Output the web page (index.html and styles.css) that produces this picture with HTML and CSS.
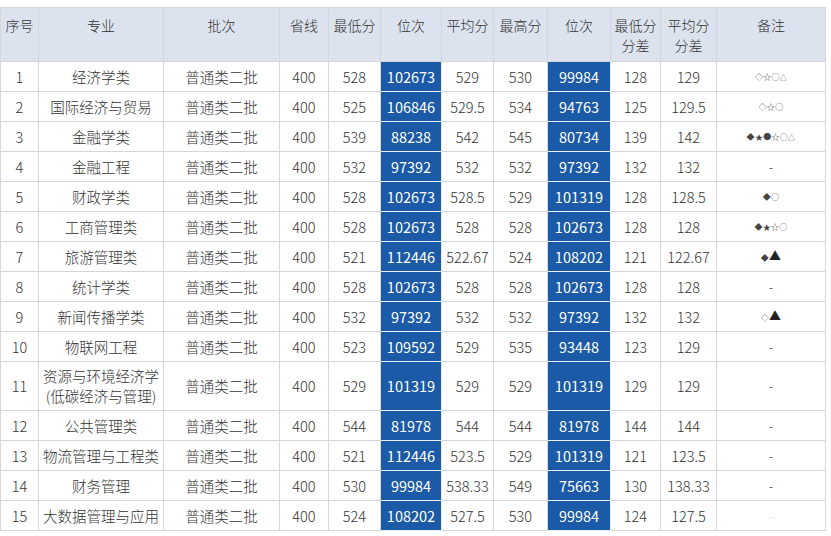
FILE: index.html
```html
<!DOCTYPE html>
<html lang="zh">
<head>
<meta charset="utf-8">
<title>分数表</title>
<link rel="stylesheet" href="styles.css">
</head>
<body>
<table class="score">
  <colgroup>
    <col class="c-no"><col class="c-major"><col class="c-batch"><col class="c-line"><col class="c-min">
    <col class="c-rank1"><col class="c-avg"><col class="c-max"><col class="c-rank2"><col class="c-d1"><col class="c-d2"><col class="c-note">
  </colgroup>
  <thead>
    <tr>
      <th>序号</th><th>专业</th><th>批次</th><th>省线</th><th>最低分</th><th>位次</th><th>平均分</th><th>最高分</th><th>位次</th><th>最低分<br>分差</th><th>平均分<br>分差</th><th>备注</th>
    </tr>
  </thead>
  <tbody>
    <tr><td>1</td><td>经济学类</td><td>普通类二批</td><td>400</td><td>528</td><td class="blue">102673</td><td>529</td><td>530</td><td class="blue">99984</td><td>128</td><td>129</td><td class="note">◇☆○<span class="tri">△</span></td></tr>
    <tr><td>2</td><td>国际经济与贸易</td><td>普通类二批</td><td>400</td><td>525</td><td class="blue">106846</td><td>529.5</td><td>534</td><td class="blue">94763</td><td>125</td><td>129.5</td><td class="note">◇☆○</td></tr>
    <tr><td>3</td><td>金融学类</td><td>普通类二批</td><td>400</td><td>539</td><td class="blue">88238</td><td>542</td><td>545</td><td class="blue">80734</td><td>139</td><td>142</td><td class="note">◆★●☆○<span class="tri">△</span></td></tr>
    <tr><td>4</td><td>金融工程</td><td>普通类二批</td><td>400</td><td>532</td><td class="blue">97392</td><td>532</td><td>532</td><td class="blue">97392</td><td>132</td><td>132</td><td class="dash">-</td></tr>
    <tr><td>5</td><td>财政学类</td><td>普通类二批</td><td>400</td><td>528</td><td class="blue">102673</td><td>528.5</td><td>529</td><td class="blue">101319</td><td>128</td><td>128.5</td><td class="note">◆○</td></tr>
    <tr><td>6</td><td>工商管理类</td><td>普通类二批</td><td>400</td><td>528</td><td class="blue">102673</td><td>528</td><td>528</td><td class="blue">102673</td><td>128</td><td>128</td><td class="note">◆★☆○</td></tr>
    <tr><td>7</td><td>旅游管理类</td><td>普通类二批</td><td>400</td><td>521</td><td class="blue">112446</td><td>522.67</td><td>524</td><td class="blue">108202</td><td>121</td><td>122.67</td><td class="note">◆<span class="big">▲</span></td></tr>
    <tr><td>8</td><td>统计学类</td><td>普通类二批</td><td>400</td><td>528</td><td class="blue">102673</td><td>528</td><td>528</td><td class="blue">102673</td><td>128</td><td>128</td><td class="dash">-</td></tr>
    <tr><td>9</td><td>新闻传播学类</td><td>普通类二批</td><td>400</td><td>532</td><td class="blue">97392</td><td>532</td><td>532</td><td class="blue">97392</td><td>132</td><td>132</td><td class="note">◇<span class="big">▲</span></td></tr>
    <tr><td>10</td><td>物联网工程</td><td>普通类二批</td><td>400</td><td>523</td><td class="blue">109592</td><td>529</td><td>535</td><td class="blue">93448</td><td>123</td><td>129</td><td class="dash">-</td></tr>
    <tr class="tall"><td>11</td><td>资源与环境经济学<br>(低碳经济与管理)</td><td>普通类二批</td><td>400</td><td>529</td><td class="blue">101319</td><td>529</td><td>529</td><td class="blue">101319</td><td>129</td><td>129</td><td class="dash">-</td></tr>
    <tr><td>12</td><td>公共管理类</td><td>普通类二批</td><td>400</td><td>544</td><td class="blue">81978</td><td>544</td><td>544</td><td class="blue">81978</td><td>144</td><td>144</td><td class="dash">-</td></tr>
    <tr><td>13</td><td>物流管理与工程类</td><td>普通类二批</td><td>400</td><td>521</td><td class="blue">112446</td><td>523.5</td><td>529</td><td class="blue">101319</td><td>121</td><td>123.5</td><td class="dash">-</td></tr>
    <tr><td>14</td><td>财务管理</td><td>普通类二批</td><td>400</td><td>530</td><td class="blue">99984</td><td>538.33</td><td>549</td><td class="blue">75663</td><td>130</td><td>138.33</td><td class="dash">-</td></tr>
    <tr><td>15</td><td>大数据管理与应用</td><td>普通类二批</td><td>400</td><td>524</td><td class="blue">108202</td><td>527.5</td><td>530</td><td class="blue">99984</td><td>124</td><td>127.5</td><td class="dash faded">-</td></tr>
  </tbody>
</table>
</body>
</html>
```
FILE: styles.css
```css
html, body {
  margin: 0;
  padding: 0;
  background: #ffffff;
}
body {
  padding-top: 7px;
  font-family: "Noto Sans CJK SC", "Noto Sans", sans-serif;
  font-weight: 300;
  color: #333333;
}
.score {
  border-collapse: collapse;
  table-layout: fixed;
  width: 826px;
  font-size: 14px;
}
.c-no { width: 38px; }
.c-major { width: 125px; }
.c-batch { width: 116px; }
.c-line { width: 49px; }
.c-min { width: 52px; }
.c-rank1 { width: 61px; }
.c-avg { width: 52px; }
.c-max { width: 54px; }
.c-rank2 { width: 63px; }
.c-d1 { width: 50px; }
.c-d2 { width: 56px; }
.c-note { width: 109px; }

.score th,
.score td {
  border: 1px solid #d3d6db;
  text-align: center;
  padding: 0;
  font-weight: 300;
  line-height: 20px;
  white-space: nowrap;
}
.score th {
  background: #dce3ee;
  vertical-align: top;
  height: 54px;
  padding-top: 7px;
  box-sizing: border-box;
}
.score td {
  height: 29px;
  font-size: 14.5px;
}
.score tr.tall td {
  height: 48px;
}
.score td.blue {
  background: #1a5aa6;
  color: #ffffff;
  font-weight: 400;
  border-color: #e9eef5;
}
.score td.note {
  font-size: 8px;
  font-weight: 400;
  color: #444;
  letter-spacing: 0.3px;
}
.note .tri {
  font-size: 7px;
}
.note .big {
  font-size: 12px;
  color: #222;
}
.score td.dash {
  font-size: 13px;
}
.score td.faded {
  color: #d6d6d6;
}
```
